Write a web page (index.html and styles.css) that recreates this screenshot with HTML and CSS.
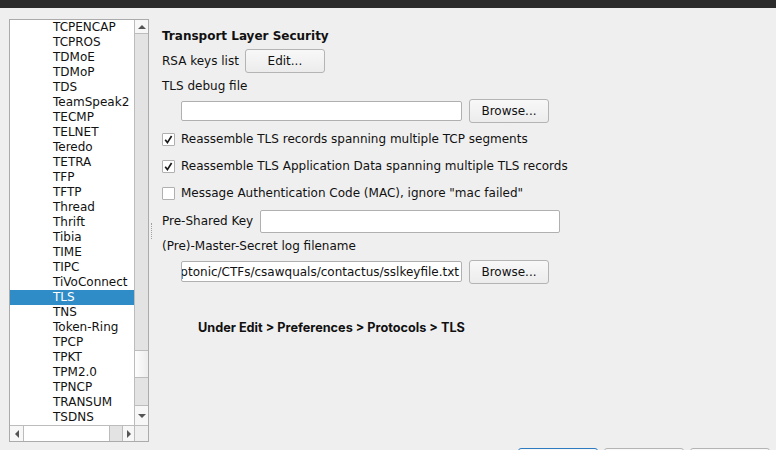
FILE: index.html
```html
<!DOCTYPE html>
<html>
<head>
<meta charset="utf-8">
<link rel="stylesheet" href="styles.css">
</head>
<body>
<div class="topbar"></div>
<div class="main">
  <div class="listbox">
    <div class="list">
      <div class="item">TCPENCAP</div>
      <div class="item">TCPROS</div>
      <div class="item">TDMoE</div>
      <div class="item">TDMoP</div>
      <div class="item">TDS</div>
      <div class="item">TeamSpeak2</div>
      <div class="item">TECMP</div>
      <div class="item">TELNET</div>
      <div class="item">Teredo</div>
      <div class="item">TETRA</div>
      <div class="item">TFP</div>
      <div class="item">TFTP</div>
      <div class="item">Thread</div>
      <div class="item">Thrift</div>
      <div class="item">Tibia</div>
      <div class="item">TIME</div>
      <div class="item">TIPC</div>
      <div class="item">TiVoConnect</div>
      <div class="item selected">TLS</div>
      <div class="item">TNS</div>
      <div class="item">Token-Ring</div>
      <div class="item">TPCP</div>
      <div class="item">TPKT</div>
      <div class="item">TPM2.0</div>
      <div class="item">TPNCP</div>
      <div class="item">TRANSUM</div>
      <div class="item">TSDNS</div>
    </div>
    <div class="vscroll">
      <div class="sbtn"><span class="tri up"></span></div>
      <div class="vtrack-a"></div>
      <div class="vthumb"></div>
      <div class="vtrack-b"></div>
      <div class="sbtn down"><span class="tri dn"></span></div>
    </div>
    <div class="hscroll">
      <div class="hbtn"><span class="tri lt"></span></div>
      <div class="hthumb"></div>
      <div class="htrack"></div>
      <div class="hbtn right"><span class="tri rt"></span></div>
    </div>
    <div class="corner"></div>
  </div>
  <div class="splitter"><div class="dots"></div></div>
  <div class="panel">
    <div class="row title">Transport Layer Security</div>
    <div class="row r-rsa">
      <span>RSA keys list</span>
      <button class="btn">Edit...</button>
    </div>
    <div class="row r-lbl1">TLS debug file</div>
    <div class="row r-dbg indent">
      <div class="input w281 h20"></div>
      <button class="btn">Browse...</button>
    </div>
    <div class="row check r-cb1"><span class="box"><svg width="11" height="11" viewBox="0 0 11 11"><polyline points="2.2,5.8 4.4,8.6 8.6,2" fill="none" stroke="#1a1a1a" stroke-width="1.7"/></svg></span><span>Reassemble TLS records spanning multiple TCP segments</span></div>
    <div class="row check r-cb2"><span class="box"><svg width="11" height="11" viewBox="0 0 11 11"><polyline points="2.2,5.8 4.4,8.6 8.6,2" fill="none" stroke="#1a1a1a" stroke-width="1.7"/></svg></span><span>Reassemble TLS Application Data spanning multiple TLS records</span></div>
    <div class="row check r-cb3"><span class="box"></span><span>Message Authentication Code (MAC), ignore "mac failed"</span></div>
    <div class="row r-psk">
      <span>Pre-Shared Key</span>
      <div class="input w300 h23"></div>
    </div>
    <div class="row r-lbl2">(Pre)-Master-Secret log filename</div>
    <div class="row r-file indent">
      <div class="input w281 h21 filled"><span>/home/user/Documents/Cryptonic/CTFs/csawquals/contactus/sslkeyfile.txt</span></div>
      <button class="btn">Browse...</button>
    </div>
    <div class="row note">Under Edit &gt; Preferences &gt; Protocols &gt; TLS</div>
  </div>
</div>
<div class="buttons">
  <div class="dbtn primary"></div>
  <div class="dbtn"></div>
  <div class="dbtn"></div>
</div>
</body>
</html>
```
FILE: styles.css
```css
* { box-sizing: border-box; }
html, body {
  margin: 0;
  padding: 0;
  width: 776px;
  height: 450px;
  overflow: hidden;
  background: #efefef;
  font-family: "DejaVu Sans", sans-serif;
  font-size: 12px;
  color: #111;
}
.topbar {
  height: 8px;
  background: #2b2b2b;
}
.main {
  display: flex;
  align-items: stretch;
  padding-top: 11px;
  padding-left: 9px;
  height: 434px;
}
.listbox {
  width: 140px;
  height: 423px;
  border: 1px solid #ababab;
  background: #fff;
  display: grid;
  grid-template-columns: 124px 14px;
  grid-template-rows: 405px 16px;
  flex-shrink: 0;
}
.list {
  overflow: hidden;
}
.item {
  height: 15px;
  line-height: 15px;
  padding-left: 43px;
  white-space: nowrap;
  color: #111;
  overflow: hidden;
}
.item.selected {
  background: #308cc6;
  color: #fff;
}
.vscroll {
  border-left: 1px solid #bcbcbc;
  display: flex;
  flex-direction: column;
  background: #e3e3e3;
}
.sbtn {
  height: 14px;
  background: #f7f7f7;
  border-bottom: 1px solid #bcbcbc;
  display: flex;
  align-items: center;
  justify-content: center;
}
.sbtn.down {
  height: 20px;
  border-bottom: none;
  border-top: 1px solid #bcbcbc;
}
.vtrack-a { height: 316px; background: #e3e3e3; }
.vthumb {
  height: 28px;
  background: linear-gradient(to right, #fdfdfd, #ededed);
  border-top: 1px solid #bcbcbc;
  border-bottom: 1px solid #bcbcbc;
}
.vtrack-b { flex: 1; background: #e3e3e3; }
.hscroll {
  border-top: 1px solid #bcbcbc;
  display: flex;
  background: #f7f7f7;
}
.hbtn {
  width: 14px;
  display: flex;
  align-items: center;
  justify-content: center;
  border-right: 1px solid #bcbcbc;
  background: #f7f7f7;
}
.hbtn.right {
  width: 12px;
  border-right: none;
  border-left: 1px solid #bcbcbc;
}
.hthumb {
  width: 86px;
  background: #fff;
  border-right: 1px solid #bcbcbc;
}
.htrack { flex: 1; background: #e3e3e3; }
.corner {
  border-top: 1px solid #bcbcbc;
  border-left: 1px solid #bcbcbc;
  background: #efefef;
}
.tri { width: 0; height: 0; display: block; }
.tri.up { border-left: 4px solid transparent; border-right: 4px solid transparent; border-bottom: 4px solid #555; }
.tri.dn { border-left: 4px solid transparent; border-right: 4px solid transparent; border-top: 4px solid #555; }
.tri.lt { border-top: 4px solid transparent; border-bottom: 4px solid transparent; border-right: 4px solid #555; }
.tri.rt { border-top: 4px solid transparent; border-bottom: 4px solid transparent; border-left: 4px solid #555; }

.splitter {
  width: 13px;
  display: flex;
  align-items: center;
  height: 423px;
  flex-shrink: 0;
}
.dots {
  margin-left: 2px;
  width: 1px;
  height: 16px;
  border-left: 1px dotted #a0a0a0;
}
.panel {
  display: flex;
  flex-direction: column;
  padding-top: 9px;
  flex: 1;
}
.row {
  display: flex;
  align-items: center;
  white-space: nowrap;
}
.title { height: 15px; font-weight: bold; }
.r-rsa { height: 25px; margin-top: 5px; gap: 6px; }
.r-lbl1 { height: 14px; margin-top: 6px; }
.r-dbg { height: 25px; margin-top: 5px; gap: 7px; }
.r-cb1 { height: 14px; margin-top: 9px; }
.r-cb2 { height: 14px; margin-top: 13px; }
.r-cb3 { height: 14px; margin-top: 13px; }
.r-psk { height: 24px; margin-top: 9px; gap: 7px; }
.r-lbl2 { height: 14px; margin-top: 6px; }
.r-file { height: 25px; margin-top: 6px; gap: 7px; }
.note {
  height: 14px;
  margin-top: 36px;
  padding-left: 36px;
  font-family: Inter, "Open Sans", sans-serif;
  font-weight: 700;
  font-size: 12.7px;
  color: #111;
}
.indent { padding-left: 19px; }
.btn {
  width: 80px;
  height: 24px;
  border: 1px solid #b4b4b4;
  border-radius: 3px;
  background: linear-gradient(#f8f8f8, #ececec);
  font-family: "DejaVu Sans", sans-serif;
  font-size: 12px;
  color: #111;
  padding: 0;
}
.input {
  background: #fff;
  border: 1px solid #b0b0b0;
  border-radius: 2px;
}
.w281 { width: 281px; }
.w300 { width: 300px; }
.h20 { height: 20px; }
.h21 { height: 21px; }
.h23 { height: 23px; }
.filled {
  display: flex;
  justify-content: flex-end;
  align-items: center;
  overflow: hidden;
  padding-right: 2px;
  white-space: nowrap;
}
.filled span { flex-shrink: 0; }
.check { gap: 6px; }
.box {
  width: 13px;
  height: 13px;
  border: 1px solid #b0b0b0;
  background: #fff;
  border-radius: 1px;
  display: flex;
  align-items: center;
  justify-content: center;
  flex-shrink: 0;
}
.box svg { display: block; }
.buttons {
  display: flex;
  justify-content: flex-end;
  gap: 6px;
  padding-right: 6px;
  margin-top: 6px;
  height: 2px;
  overflow: hidden;
  align-items: flex-start;
}
.dbtn {
  width: 80px;
  height: 26px;
  border: 1px solid #b4b4b4;
  border-radius: 3px;
  background: linear-gradient(#f8f8f8, #ececec);
  flex-shrink: 0;
}
.dbtn.primary { border-color: #2e7bc0; }
```
